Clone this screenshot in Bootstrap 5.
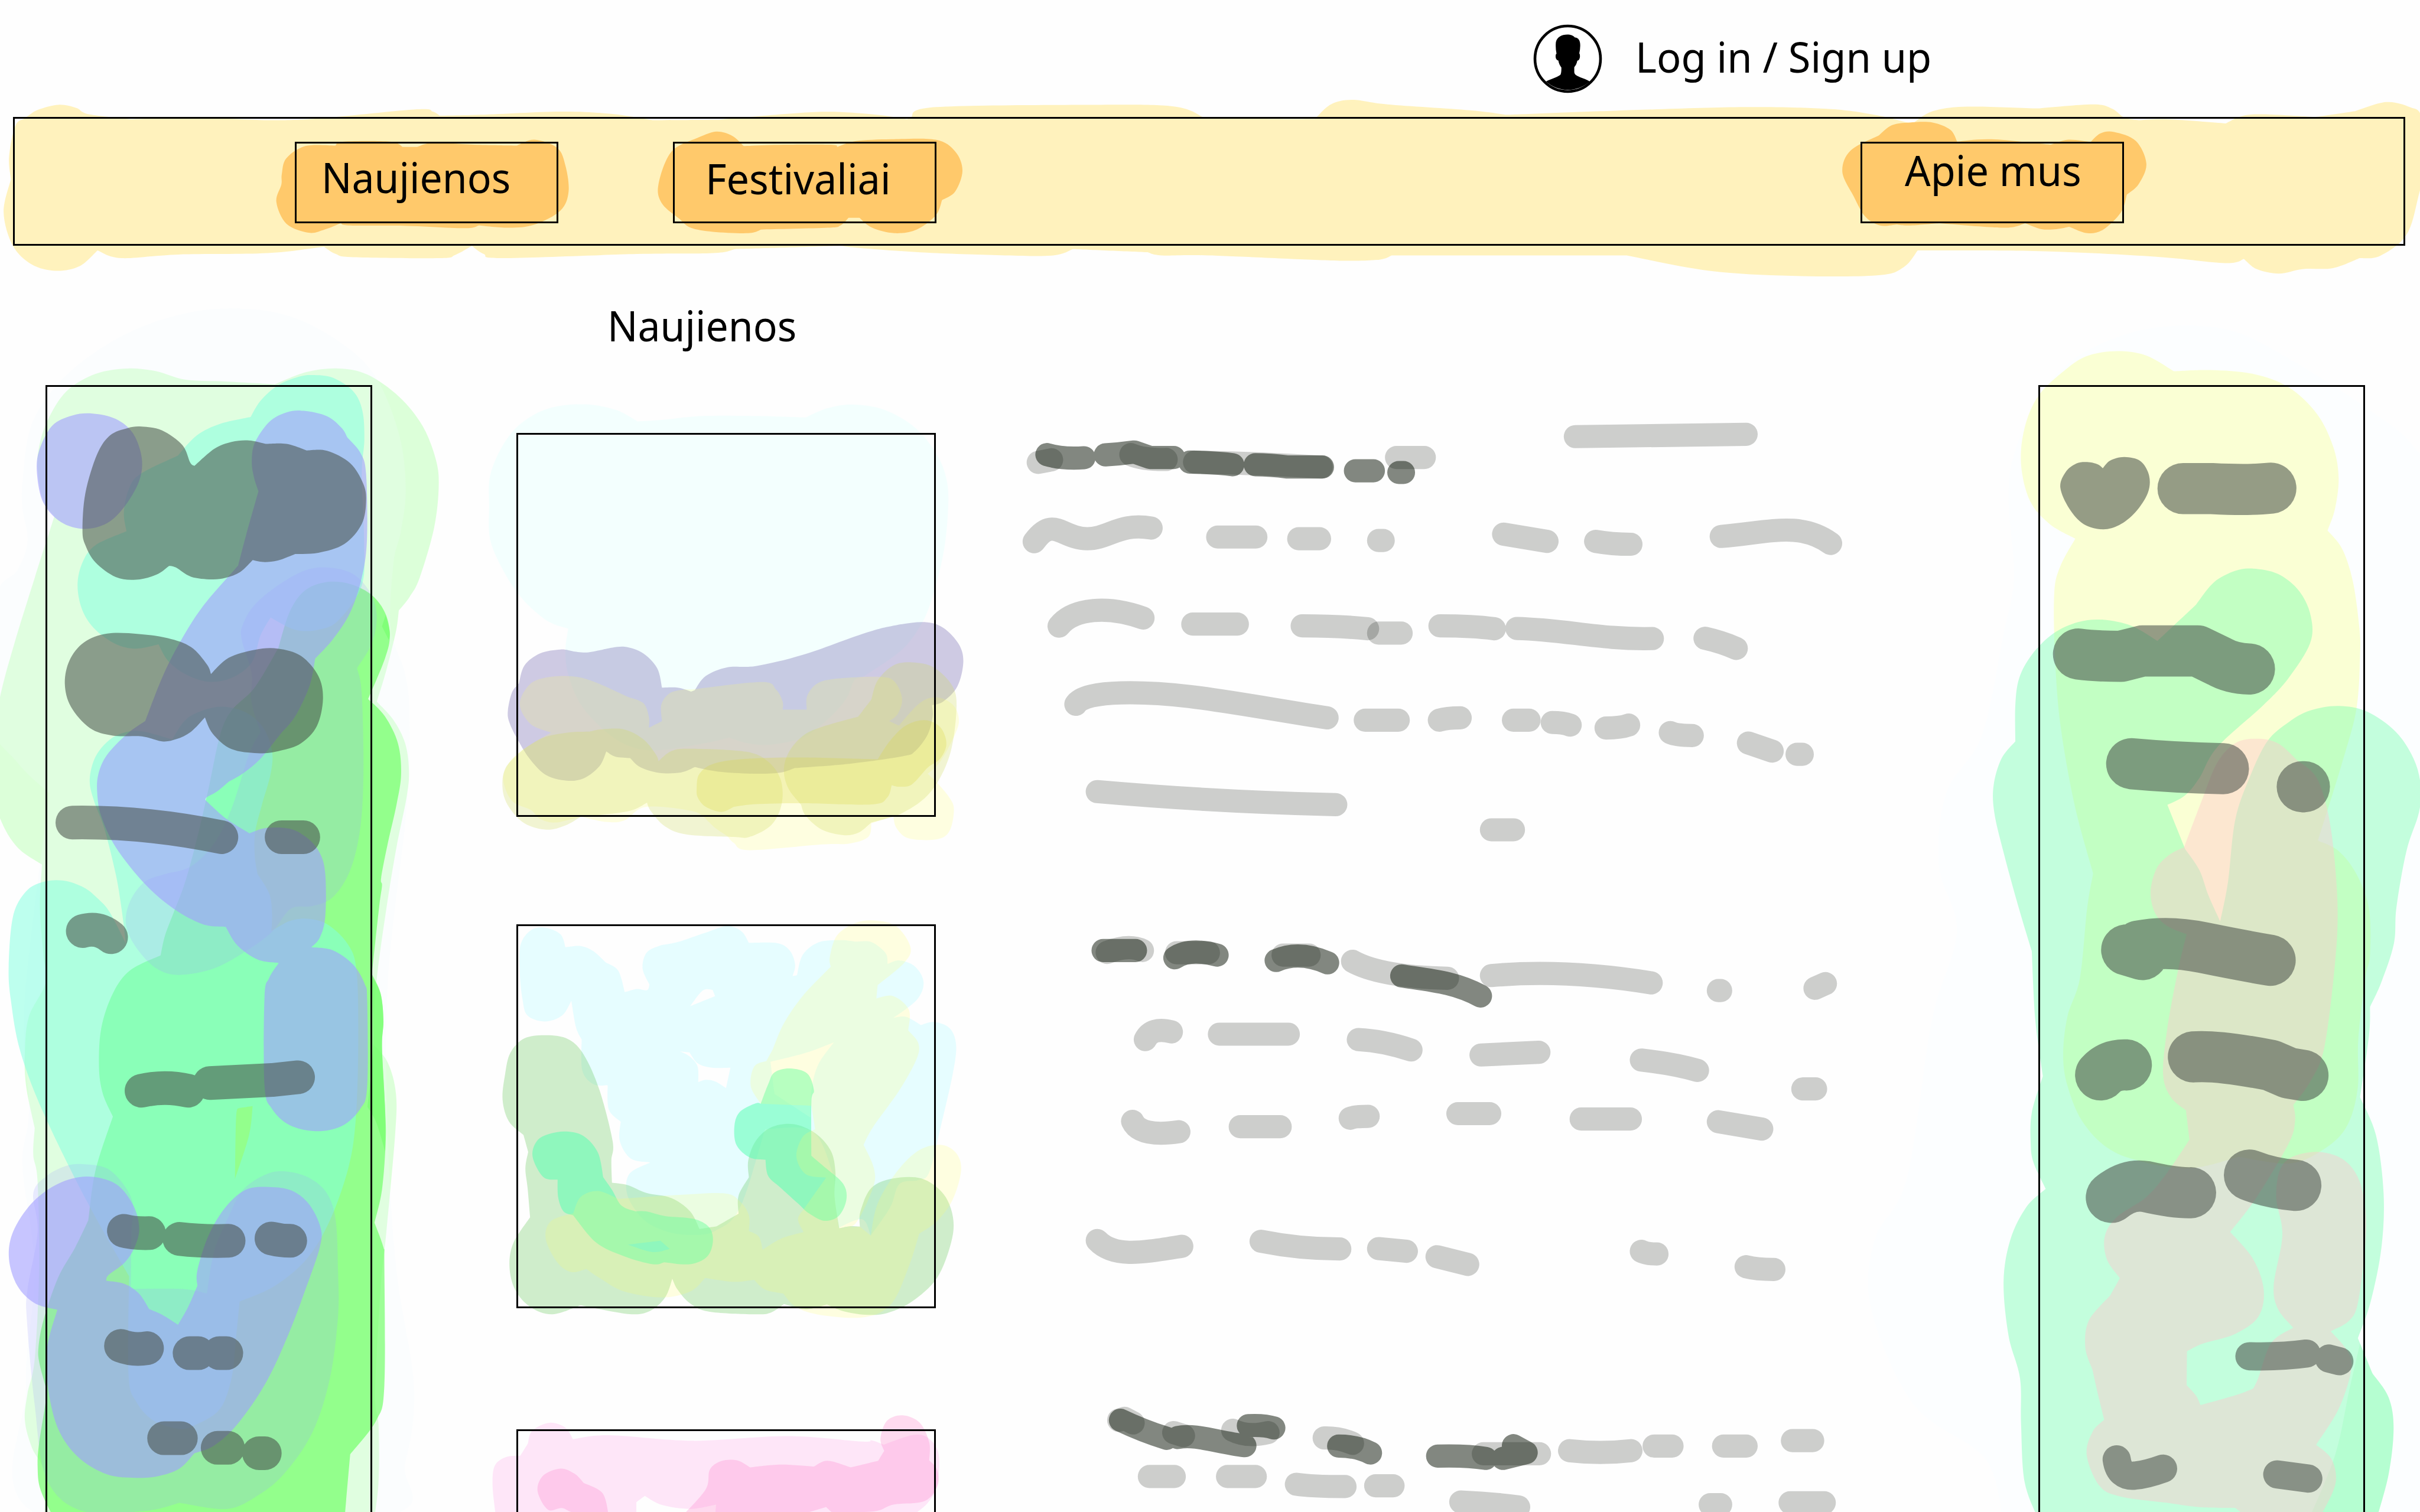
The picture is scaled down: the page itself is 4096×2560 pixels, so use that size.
<!DOCTYPE html>
<html lang="lt">
<head>
<meta charset="utf-8">
<meta name="viewport" content="width=device-width, initial-scale=1">
<title>Naujienos</title>
<link href="https://cdn.jsdelivr.net/npm/bootstrap@5.3.0/dist/css/bootstrap.min.css" rel="stylesheet">
<style>
body{background:#fefefe;color:#000;font-family:"Noto Sans","Open Sans",sans-serif}
.page{width:4096px;height:2560px}
.wash{left:0;top:0;width:4096px;height:2560px;z-index:0}
.layer{z-index:1}
.label{display:inline-block;font-size:72px;line-height:72px;white-space:nowrap;transform-origin:left top;transform:scaleX(.942)}
.label.lb-login{transform:scaleX(.953)}
.label.lb-fest,.label.lb-about{transform:scaleX(.95)}
.ink{border:3px solid #000;border-radius:0}
.top-bar{height:198px;padding:34px 0 0 2588px}
.avatar{width:131px;height:131px}
.login{margin:25px 0 0 49px}
.main-nav{height:218px;width:4049px;margin-left:22px;padding:39px 0 0 474px}
.nav-box{width:446px;height:138px;padding:0;text-align:left;color:#000}
.nav-news{padding:20px 0 0 42px}
.nav-fest{margin-left:194px;padding:22px 0 0 52px}
.nav-about{margin-left:1564px;padding:8px 0 0 72px}
.side{width:553px;height:2000px;margin-top:236px}
.side-left{margin-left:77px}
.side-right{margin-left:1866px}
.feed{width:710px;margin-left:244px;padding-top:98px}
.feed-title{margin:0 0 0 154px;height:219px}
.pic{height:650px;margin-bottom:182px}
.pic+.pic{margin-bottom:205px}
.t{fill:none;stroke:rgb(5,8,0);stroke-opacity:.195;stroke-width:39.2;stroke-linecap:round;stroke-linejoin:round}
.t path,.d path{vector-effect:non-scaling-stroke}
.d{fill:none;stroke:rgb(6,16,2);stroke-opacity:.5;stroke-width:39.2;stroke-linecap:round;stroke-linejoin:round}
.s{stroke:rgb(68,76,70);stroke-opacity:1;fill:rgb(68,76,70);opacity:.55}
.s .ln{fill:none}
</style>
<script src="https://cdn.jsdelivr.net/npm/bootstrap@5.3.0/dist/js/bootstrap.bundle.min.js"></script>
</head>
<body>
<div class="page position-relative overflow-hidden">
<svg class="wash position-absolute" viewBox="0 0 5333 3333" preserveAspectRatio="none" aria-hidden="true">
<!-- navigation washes -->
<path fill="#fff2bd" data-p="56,260 84,242 129,231 168,238 196,252 288,263* 421,259 603,265 716,260 919,241 954,246 969,255* 1059,253 1235,246 1347,251 1438,265* 1585,264* 1796,247 1922,252 1999,263* 2007,259 2063,236 2426,231 2589,235 2651,258* 2809,262 2898,262* 2933,230 2981,220 3057,230 3239,243 3320,253* 3559,244 3845,236 4026,240 4130,253 4214,273* 4259,245 4337,235 4490,239* 4613,230 4655,240 4681,259 4713,265* 4778,263 4905,272* 4940,256 4986,252 5102,258* 5190,245* 5258,225 5310,236 5336,257 5345,350 5329,435 5303,518 5245,564 5200,569* 5141,591 5076,593 5022,603 4973,593 4945,571* 4904,580 4752,566 4506,554 4226,552* 4195,589 4136,607 3948,608 3767,597 3585,563* 3067,563* 3034,573 2933,574 2665,563 2560,563 2529,556* 2364,549* 2321,563 2216,563 2043,557 1900,547 1852,542* 1620,549* 1571,558 1403,560 1108,569 1066,560 1040,542* 1003,562 968,569 779,567 740,560 714,544* 589,558 393,561 267,569 215,552* 175,587 123,597 70,583 28,541 8,468 24,395* 20,345 34,277"/>
<g fill="#ffc96b">
<path data-p="621,384 631,349 673,322 739,321* 758,312 859,312 888,324* 919,324* 954,315 1045,319 1139,321* 1178,308 1228,326 1246,365 1253,422 1235,464 1178,495 1122,502 1055,497* 1024,503 898,498 772,497 751,492* 715,506 680,513 631,493 609,445 620,407"/>
<path data-p="1451,407 1480,334 1539,303* 1578,290 1613,299 1639,322* 1726,319 1831,319 1845,324* 1887,311 1964,307 2062,308 2105,334 2121,376 2105,422 2076,441* 2062,475 2020,506 1971,514 1922,502 1894,480* 1870,480* 1852,497 1824,502 1677,506* 1649,514 1571,511 1522,502 1498,483* 1459,449"/>
<path data-p="4060,379 4078,332 4141,298* 4169,276 4208,270 4259,270 4298,286 4313,312* 4389,307 4519,319* 4558,308 4607,313* 4629,294 4659,291 4707,311 4730,361 4713,406 4687,429* 4674,468 4635,506 4600,514 4560,500* 4532,505 4499,505 4463,492* 4415,502 4272,492* 4208,497 4179,495* 4143,497 4110,477 4084,431*"/>
</g>
<!-- left column -->
<g transform="translate(0 680) scale(.63776 .84821)">
<path fill="#dcffd9" data-p="130,420 135,360 165,290 230,215 330,170 440,156 540,163 640,185 780,190 950,197* 1060,165 1170,156 1270,172 1380,230 1460,305 1505,390 1516,460 1500,570 1450,700 1415,750 1378,785* 1368,840 1335,940 1302,1022* 1360,1070 1400,1130 1413,1200 1405,1270 1370,1400 1335,1560 1300,1756 1290,1912* 1340,1960 1368,2040 1365,2150 1335,2400 1315,2550 1296,2820 1308,2900 1308,3050 1290,3160* 150,3160* 155,3030 110,2960 86,2890 95,2820 120,2730 135,2500 130,2270 115,2200 120,2130* 90,2020 86,1930 100,1840 158,1752 150,1680 138,1560 145,1445* 60,1400 0,1325 -50,1200 0,1010 50,870 120,700 188,540* 150,500"/>
<path fill="rgb(238,250,255)" fill-opacity=".2" data-p="78,520 78,450 110,300 220,180 400,80 600,20 800,0 1000,20 1180,90 1300,180 1380,330 1402,470 1385,580 1360,660 1350,830 1400,950 1415,1060 1405,1300 1340,1750 1340,2150 1370,2500 1430,2800 1400,3000 1310,3140 150,3140 90,2800 120,2500 78,2230 100,2080 85,1800 170,1260* 60,1180 -40,1060 -20,760 60,680 95,605"/>
<path fill="rgb(106,255,95)" fill-opacity=".65" data-p="962,882* 1000,790 1050,735 1120,712 1200,714 1280,742 1330,790 1347,850 1330,910 1272,1015* 1330,1060 1375,1130 1386,1210 1370,1290 1340,1390 1317,1480 1320,1500 1310,1556 1285,1730* 1315,1780 1325,1850 1320,1920 1330,2070 1333,2160 1320,2290 1294,2376* 1325,2440 1328,2480 1328,2800 1300,2890 1210,2978* 1190,3150* 190,3150* 140,3070 130,3010 135,2950 158,2840 158,2802* 136,2740 133,2700 150,2630 200,2520 260,2440 305,2370* 330,2240 390,2100* 355,2040 342,1970 350,1870 390,1780 450,1720 555,1681* 570,1630 600,1570 640,1490 680,1380 720,1250 760,1110 800,1045 880,985"/>
<path fill="rgb(110,255,100)" fill-opacity=".5" data-p="1270,2075* 1290,1910 1285,1735* 1315,1780 1325,1850 1320,1920 1330,2070 1331,2190* 1300,2115"/>
<path fill="rgb(110,255,100)" fill-opacity=".5" data-p="1320,826* 1333,796* 1347,840 1344,862*"/>
<path fill="rgb(130,255,222)" fill-opacity=".53" data-p="866,282* 900,240 960,200 1030,178 1080,173 1150,180 1220,215 1252,265 1259,340 1250,430 1258,600 1250,720 1170,810 1100,835 1020,835 935,803* 900,850 870,920 800,960 720,970 640,950 580,915 548,873* 470,884 400,872 330,835 285,785 268,720 285,660 330,615 437,579* 428,530 445,470 485,430 615,382* 680,330 760,300"/>
<path fill="rgb(130,255,222)" fill-opacity=".53" fill-rule="evenodd" data-p="310,1225 330,1165 380,1120 440,1100 500,1100 595,1120* 640,1070 700,1045 770,1035 850,1050 910,1090 940,1150 935,1210 905,1290 882,1360 880,1420 890,1470* 930,1520 940,1570 938,1618* 1000,1592 1060,1586 1130,1600 1200,1650 1232,1720 1238,1900 1230,2100 1205,2230 1140,2370 1060,2470 950,2540 828,2581* 815,2680 800,2780 760,2860 680,2900 620,2912 530,2890 470,2840 444,2770 446,2515* 300,2320 150,2090 70,1930 38,1800 30,1710 45,1580 90,1515 150,1490 220,1487 290,1505 340,1535 380,1570 435,1650* 420,1560 400,1470 360,1350 325,1280; 827,2078* 873,2073* 860,2150 812,2262* 816,2100"/>
<path fill="rgb(160,160,255)" fill-opacity=".2" data-p="835,860 840,820 880,770 960,720 1050,682 1130,673 1220,690 1280,740 1302,800 1285,870 1234,935* 1250,1000 1256,1200 1245,1350 1210,1460 1150,1530 1080,1553 1005,1560 940,1620 850,1670 740,1715 620,1732 540,1715 470,1660 435,1600 450,1540 500,1490 570,1470 660,1450 740,1390 800,1300 860,1160 900,1100* 868,1020 870,950; 115,2300 160,2255 230,2228 290,2224 370,2235 430,2280 460,2330 455,2400 452,2548* 630,2548 715,2560* 740,2450 790,2360 840,2290 920,2250 990,2243 1070,2260 1130,2300 1160,2370 1168,2500 1168,2620 1140,2780 1080,2920 980,3030 880,3090 780,3120 620,3104* 500,3125 280,3124 160,3040 120,2850 93,2630 95,2550 130,2400"/>
<path fill="rgb(162,158,255)" fill-opacity=".6" data-p="128,430 135,370 180,305 250,278 320,273 400,287 460,325 490,390 480,450 430,515 370,558 290,573 210,555 150,505; 870,400 880,350 930,295 990,270 1050,266 1130,280 1180,310 1200,335* 1245,375 1265,430 1268,600 1250,700 1210,790 1150,860 1089,910* 1070,980 1020,1060 970,1105* 900,1170 840,1208 790,1230* 750,1255 715,1270 709,1277* 780,1325 862,1364* 920,1350 1000,1352 1060,1375 1105,1415 1124,1470 1124,1580 1105,1635 1076,1660* 1150,1668 1220,1705 1260,1755 1269,1800 1269,2020 1245,2080 1180,2125 1090,2138 1000,2122 940,2080 914,2020 914,1790 930,1740 963,1701* 890,1692 820,1655 780,1607* 700,1600 600,1560 500,1495 400,1400 350,1320 336,1260 340,1210 370,1160 440,1105 502,1072* 560,960 620,870 700,775 823,668* 850,590 893,475* 878,440; 31,2470 45,2400 110,2325 200,2275 300,2256 400,2275 460,2330 481,2390 465,2440 430,2480 375,2512 367,2527* 430,2535 480,2560 515,2600* 560,2615 615,2641* 650,2595 682,2540* 682,2500 720,2410 780,2335 850,2290 930,2283 1010,2293 1070,2330 1108,2390 1105,2440 1060,2540 1000,2660 920,2790 820,2900 740,2955 672,2975* 620,3015 550,3034 470,3039 370,3030 270,2985 200,2910 165,2800 163,2700 198,2602* 120,2585 60,2540"/>
<g class="d s">
<path style="stroke:none" data-p="285,575 295,480 335,380 380,330 440,311 490,307 560,317 630,355 657,400 672,409* 740,365 800,347 860,343 918,352* 990,352 1060,369* 1130,370 1210,402 1255,455 1265,500 1250,560 1190,612 1100,635 1020,638* 960,655 910,659 873,654* 830,685 780,700 730,704 660,697 608,673 584,669* 540,692 470,705 400,698 330,660 295,615; 224,975 240,915 290,868 370,845 480,846 580,857 660,880 715,925 729,950* 790,908 880,887 960,884 1040,903 1100,955 1116,1015 1095,1085 1040,1130 970,1149 900,1156 800,1145 735,1105 708,1063* 660,1100 610,1119 560,1125 490,1112 390,1110 310,1090 245,1035"/>
<path class="ln" style="stroke-width:57px" d="M250,1336Q500,1333 765,1374M973,1374H1048M286,1618Q340,1606 384,1634M489,2033Q570,2019 650,2033M725,2013L940,2005L1030,1998M428,2397Q460,2404 515,2403M620,2418Q700,2425 790,2423M938,2417Q970,2423 1003,2423M418,2696Q460,2708 508,2702M655,2715H685M758,2715H782M567,2936H625M752,2961H788M895,2975H915"/>
</g>
</g>
<!-- right column -->
<g transform="translate(4100 680) scale(.78635 .84821)">
<path fill="#fcfeff" data-p="415,500 430,380 500,230 600,130 750,65 900,45 1050,60 1200,130 1420,260 1560,370 1700,600 1700,3160* 400,3160* 350,2990 150,2850 30,2600 40,2420 130,2260 200,1850 270,1620 220,1450 240,1260 340,1110 400,850 430,700"/>
<path fill="#faffd4" data-p="450,405 460,310 500,225 580,155 640,122 720,111 800,122 878,163* 980,160 1100,170 1200,205 1280,275 1325,360 1340,440 1330,520 1309,577* 1350,625 1380,710 1398,830 1400,900 1390,1040 1350,1180 1282,1383* 1340,1410 1390,1470 1425,1560 1428,1680 1415,1740 1395,1900 1393,2030 1360,2130 1290,2190 1200,2222 1060,2205* 920,2235 780,2215 690,2180 620,2110 580,2020 568,1940 580,1840 615,1740 635,1560 652,1468* 600,1290 560,1080 545,900 543,740 560,670 602,598* 530,560 475,500"/>
<path fill="rgb(110,255,170)" fill-opacity=".4" data-p="434,1030 445,960 480,900 540,845 610,815 680,809 760,825 832,864* 940,770* 990,712 1050,682 1100,676 1170,690 1230,735 1262,800 1260,870 1200,960 1130,1030 1000,1140 950,1220 910,1265 860,1290* 910,1405* 950,1460 975,1525 1008,1593* 1030,1490 1050,1330 1090,1220 1140,1125 1200,1075 1260,1045 1340,1033 1420,1048 1500,1100 1550,1170 1570,1240 1565,1310 1530,1410 1502,1556 1495,1650 1460,1750 1428,1815* 1425,1890 1400,2050* 1445,2150 1466,2300 1460,2440 1430,2580 1394,2676* 1435,2768* 1480,2830 1494,2910 1480,3030 1445,3150* 500,3150* 460,3050 450,2900 447,2780 415,2670 401,2530 420,2420 465,2335 519,2288* 485,2220 477,2170 480,2090 511,1995* 490,1850 480,1670* 443,1556 400,1410 375,1310 373,1240 395,1170 434,1125*"/>
<path fill="rgb(100,255,140)" fill-opacity=".14" data-p="1255,3150* 1330,2980 1370,2810 1400,2690* 1435,2768* 1480,2830 1494,2910 1480,3030 1445,3150*"/>
<path fill="rgb(255,199,205)" fill-opacity=".43" data-p="813,1515 830,1455 865,1420 907,1400* 960,1270 1000,1180 1050,1130 1110,1118 1170,1130 1225,1175* 1275,1215 1305,1290 1325,1400 1337,1556 1330,1700 1300,1920 1260,2010 1213,2070* 1218,2110 1200,2170 1110,2310 1036,2400* 1100,2470 1130,2550 1115,2620 1050,2665 960,2690 915,2710* 914,2798* 940,2825 953,2850* 1080,2815 1110,2790 1150,2690 1213,2649* 1170,2600 1158,2540 1180,2430 1180,2380 1165,2310 1175,2240 1210,2205 1280,2192 1350,2210 1395,2260 1415,2340 1415,2430 1395,2580 1370,2630 1318,2658* 1365,2710 1375,2760 1340,2860 1277,2953* 1320,2990 1332,3050 1300,3120 1270,3160* 1110,3160* 1050,3117* 950,3115 850,3103 730,3088 670,3060 634,2980 650,2920 683,2888* 665,2820 650,2758* 630,2700 640,2630 700,2565* 727,2520* 690,2470 685,2410 720,2360 800,2310 860,2245 922,2160* 912,2084* 870,2050 848,1990 860,1870 890,1720 914,1626* 860,1605 825,1570"/>
<g class="d s">
<path style="stroke:none" data-p="560,465 575,425 605,403 635,399 665,405 679,415* 700,395 740,386 785,397 809,435 805,480 770,530 725,563 678,574 625,560 585,520"/>
<path class="ln" style="stroke-width:86.6px" d="M904,468H985Q1090,473 1150,467M611,898Q660,904 730,904L790,890H945L1005,917Q1040,936 1090,937M760,1183Q880,1193 1017,1196M1238,1243h6M746,1667L790,1679M780,1657Q860,1642 960,1661T1148,1694M673,1992Q700,1964 745,1966M933,1945Q1000,1940 1150,1967L1200,1987L1240,1993M703,2310Q750,2274 800,2282Q880,2299 925,2298M1090,2252Q1150,2274 1220,2279"/>
<path class="ln" style="stroke-width:47.7px" d="M1090,2723Q1180,2725 1250,2716M1313,2729L1342,2736M718,2991Q725,3038 770,3033Q800,3031 848,3015M1168,3030L1255,3041"/>
</g>
</g>
<!-- first picture -->
<g transform="translate(1080 850) scale(.68878 .66327)">
<path fill="#f3fffe" data-p="-3,400 0,300 40,200 100,125 190,75 300,62 400,80 472,119* 560,113 680,101 850,101 1010,106* 1080,75 1160,63 1260,80 1360,140 1430,230 1462,320 1465,420 1450,560 1410,720 1370,810 1310,885 1195,967* 1165,980 1140,1040 1080,1110 1000,1170 900,1193 830,1190 765,1170* 680,1190 540,1212 450,1200 370,1150 290,1060 250,960 241,880 250,808* 180,780 100,705 40,610 0,510"/>
<path fill="rgb(130,118,185)" fill-opacity=".38" data-p="57,1080 70,1020 92,990* 110,930 160,890 225,877 265,883* 310,887 370,875* 430,868 490,890 535,940 550,1004* 600,1004 643,1017* 655,1012* 690,965 760,936 850,932 1000,895 1200,822 1300,796 1390,786 1450,805 1500,860 1514,920 1495,1000 1450,1050 1414,1062* 1416,1100 1400,1160 1360,1215 1320,1232 1150,1257 975,1271* 930,1286 850,1290 730,1283 655,1268* 610,1286 540,1287 480,1268 448,1238* 400,1233 372,1216* 350,1265 300,1305 245,1313 180,1295 130,1245 90,1180 62,1120"/>
<path fill="rgb(255,255,107)" fill-opacity=".2" data-p="95,1060 125,995 180,970 260,966 330,983 440,1034* 490,1055 508,1100 508,1137* 550,1115* 548,1060 575,1022 620,1010 660,1008 870,985 915,1010 936,1050 936,1077* 1013,1077* 1015,1030 1050,988 1120,973 1250,968 1295,985 1318,1040 1305,1090 1277,1115* 1308,1130* 1375,1055 1430,1036 1480,1060 1500,1110 1485,1165 1440,1250 1400,1290* 1430,1320 1470,1370 1484,1410 1470,1480 1430,1508 1340,1505 1300,1470 1290,1430* 1220,1455* 1210,1500 1150,1522 1060,1525 830,1544 780,1520 760,1498* 720,1470 700,1450* 650,1415 500,1400 430,1445 370,1450 290,1432* 210,1452 160,1440 130,1410 70,1380 42,1310 60,1255 105,1210 195,1153* 130,1125"/>
<path fill="rgb(209,219,96)" fill-opacity=".28" data-p="40,1340 50,1270 105,1210* 170,1170 250,1153 318,1150* 360,1142 430,1143 490,1175 530,1225 539,1248* 580,1215 640,1207 820,1217 890,1250 930,1310 933,1390 900,1460 830,1500 780,1500 630,1492 560,1465 515,1415 502,1386* 440,1415 290,1433* 240,1462 180,1476 110,1455 60,1400; 940,1280 955,1220 1000,1165 1060,1135 1178,1100* 1220,1043* 1240,980 1290,930 1350,920 1420,937 1480,1000 1492,1080 1470,1230 1410,1350 1320,1420 1220,1452* 1180,1485 1130,1494 1060,1475 1010,1430 995,1393* 955,1340"/>
<path fill="rgb(219,216,68)" fill-opacity=".28" data-p="661,1340 670,1290 720,1255 830,1240 1000,1236 1240,1242* 1280,1180 1330,1130 1390,1112 1440,1135 1460,1190 1440,1240 1400,1270 1350,1325 1310,1333 1285,1328* 1270,1370 1220,1392 1000,1388 850,1391 780,1400* 740,1417 690,1400 665,1370"/>
</g>
<!-- second and third pictures -->
<g transform="translate(1080 1980) scale(.68878 .86288)">
<path fill="#e6fdff" fill-rule="evenodd" data-p="95,190 97,120 130,82 175,75 225,92 241,125* 290,122 330,135 370,164* 410,185 431,240* 470,232 502,235 510,221* 488,180 500,140 540,122 600,112 700,85 760,71 805,85 828,114* 920,115 960,135 976,170 968,199* 982,197* 1000,145 1050,113 1120,107 1170,111* 1220,112 1265,140 1272,168* 1310,159 1360,175 1387,215 1365,260 1290,306* 1330,303 1378,324* 1420,316 1470,332 1491,375 1480,450 1440,590 1405,700 1370,720 1310,730 1280,790 1218,862* 1190,820 1115,842* 1102,760 1095,700 1030,595 880,590* 800,790 720,850 640,860 560,850 490,820 440,760 445,705 512,675* 450,665 415,620 418,571* 380,540 376,478* 330,475 295,440 293,361* 275,330 260,262* 230,300 175,315 120,300 104,260; 640,276* 680,236 712,234* 720,250*; 608,391* 638,394* 665,422 710,433 769,433* 755,485* 720,468 690,464 666,470* 664,430 640,405; 897,418* 1010,395 1100,368* 1050,425 1028,490 1025,560* 910,500*"/>
<path fill="rgb(98,200,85)" fill-opacity=".3" data-p="40,515 48,450 65,395 110,358 180,350 250,360 300,400 350,490 392,620 388,670 390,727* 440,733 500,753 580,766 640,800 670,845* 725,838* 795,806* 795,760 828,713* 826,670 850,620 900,585 970,577 1040,600 1090,645 1105,700 1102,760 1117,843* 1150,838 1183,839* 1185,800 1220,740 1290,716 1380,716 1450,755 1481,815 1475,880 1430,970 1350,1030 1270,1060 1200,1064 1130,1055 1078,1038* 1010,1050 940,1037* 900,1058 850,1063 700,1056 640,1035 600,1000 583,972* 560,1020 510,1055 440,1062 290,1040* 200,1063 130,1045 80,1000 62,940 75,880 128,815* 120,740 113,690 122,648* 107,605* 60,570"/>
<path fill="rgb(87,255,178)" fill-opacity=".53" data-p="136,660 150,620 190,602 245,596 300,608 345,650 362,713* 390,745 420,785 465,800* 500,800 560,812 650,819 700,840 713,875 695,915 640,935 557,930* 520,935 430,915 340,880 266,810* 235,800 218,765 216,719* 170,712; 782,580 800,545 850,524 866,525* 890,475 910,445 960,435 1015,448 1036,490 1028,520 1028,658* 1075,690 1130,730 1140,770 1115,812 1068,824 1020,805 995,787* 930,740 890,710 881,668* 830,662 788,630"/>
<path fill="rgb(255,255,107)" fill-opacity=".2" fill-rule="evenodd" data-p="1087,150 1110,95 1170,63 1230,57 1300,72 1345,125 1325,165 1240,222* 1236,256* 1290,250 1340,285 1338,338* 1370,370 1365,410 1310,490 1225,585 1195,630* 1228,690 1225,740 1170,830 1117,843* 1003,853* 985,820 1003,795* 1075,714* 1010,705 980,660 1000,610 1040,590* 1028,530* 866,525* 834,480 845,430 884,416* 905,385* 940,320 1000,250 1090,175*; 178,870 195,825 266,805* 290,763 345,748 410,768* 600,758 750,754 800,775 828,810 828,850* 860,865 872,898* 930,870 1003,853* 1117,843* 1183,839* 1218,862* 1240,780 1300,700 1370,645 1440,630 1490,650 1507,695 1480,770 1430,825 1373,857* 1340,940 1285,1035 1200,1070 1060,1065 980,1045 938,1010* 880,1000 845,975* 780,980 688,970* 640,1005 550,1020 430,1005 350,970 308,947* 260,955 215,930; 440,885* 545,875* 575,896* 520,904"/>
<path fill="#fee6f8" data-p="8,1500 15,1450 50,1428 97,1424* 121,1393* 135,1360 190,1340 240,1352 265,1382* 380,1372 650,1386 950,1374 1190,1388 1220,1385 1260,1396* 1350,1372 1400,1378 1435,1420 1430,1500 1400,1545 1350,1578* 720,1578* 723,1549* 640,1560 550,1550 495,1527* 468,1543* 468,1578* 18,1578*"/>
<path fill="rgb(255,126,202)" fill-opacity=".28" data-p="152,1515 170,1475 225,1457 270,1470 300,1494* 360,1520 380,1580* 270,1570 230,1558 185,1562; 615,1578* 690,1510 703,1460 740,1438 790,1436 832,1454* 930,1447 1036,1452* 1080,1437 1154,1454* 1242,1437* 1261,1412* 1249,1380 1270,1335 1320,1321 1375,1340 1405,1390 1405,1436* 1430,1460 1432,1500 1390,1540 1290,1549 1230,1566 1095,1570* 1075,1555* 980,1578*"/>
</g>
<!-- body copy scribbles -->
<g transform="translate(2200 900) scale(1.27551 .63776)">
<g class="t"><path d="M997,98L1292,90M69,187L92,178M229,160Q250,178 290,177M339,186Q450,190 558,203M688,170H736M62,461C95,370 110,451 154,451C190,451 210,395 264,414M379,445H445M519,451H555M657,457H665M873,435L948,460M1032,460Q1060,470 1093,470M1249,443C1330,430 1385,390 1438,467M105,753C130,690 190,682 250,725M336,746H413M525,752Q590,752 638,762M763,752Q820,752 857,762M896,761C980,765 1040,800 1130,796M1221,795Q1250,808 1275,830M134,1023C150,970 260,980 330,996C400,1013 480,1043 568,1070M634,1078H691M762,1078Q775,1070 798,1070M890,1078H917M957,1086Q975,1086 988,1095M1050,1105Q1075,1105 1089,1095M1161,1121Q1172,1131 1199,1131M1296,1157L1337,1185M1380,1196H1389M171,1325Q370,1360 583,1370M852,1457H890"/><path d="M657,777H696"/></g>
<g class="d"><path d="M84,160Q110,176 148,171M185,161Q210,158 235,151L262,170H303M331,186Q380,188 405,195M444,195Q470,195 500,203H560M617,216H648M692,222H700"/></g>
</g>
<g transform="translate(2200 2000) scale(1.27551 .85013)">
<g class="t"><path d="M188,117Q225,95 249,112M308,118H363M492,124H537M612,140Q660,180 776,184M852,177Q980,160 1128,196M1244,216H1248M1411,210L1429,198M254,343Q265,310 299,323M382,329H501M622,343Q665,346 713,370M834,383L934,376M1111,396Q1170,406 1208,423M1390,471H1412M232,555Q245,597 312,582M418,569H487M608,547Q615,542 639,542M794,535H849M1007,549H1092M1244,556L1319,575M171,864C200,910 250,895 317,879M454,866Q520,886 590,886M657,885L705,892M758,906L811,926M1111,892Q1120,899 1138,899M1292,932Q1310,939 1340,939M208,1330L218,1325L233,1337M303,1362L320,1370M405,1356Q430,1375 466,1362M563,1376Q590,1375 612,1390M838,1417H935M987,1409Q1040,1418 1093,1409M1133,1397H1164M1253,1397H1292M1372,1383H1407M261,1476H304M396,1476H444M515,1496Q540,1502 599,1502M652,1500H682M799,1542Q850,1545 899,1555M1230,1549H1248M1368,1544H1427"/></g>
<g class="d"><path d="M181,112H237M305,131Q330,105 378,124M480,138Q520,112 569,144M697,178C750,190 790,195 833,230M211,1330Q250,1358 291,1377M310,1375C340,1365 380,1388 426,1396M432,1344Q460,1342 476,1350M588,1397Q620,1397 643,1415M759,1423Q810,1421 842,1429M872,1429L912,1414L890,1396"/></g>
</g>
</svg>

<header class="layer position-relative top-bar d-flex align-items-start">
<svg class="avatar flex-shrink-0" viewBox="0 0 510 510" role="img" aria-label="Profilis"><circle cx="255" cy="255" r="216" fill="#fff" stroke="#000" stroke-width="18"/><path d="M112,405C145,386 180,380 205,362Q214,354 213,312Q198,295 193,267Q174,262 175,236Q175,225 181,221Q173,180 177,145C184,112 215,95 252,95C275,95 292,102 301,114Q330,116 336,150Q340,180 331,219Q337,226 335,245Q332,265 318,268Q313,295 298,310V345Q300,360 318,368C345,382 375,388 400,405A216,216 0 0 1 112,405Z"/></svg>
<div class="login"><span class="label lb-login">Log in / Sign up</span></div>
</header>
<nav class="layer position-relative main-nav ink d-flex align-items-start">
<a class="btn ink nav-box nav-news flex-shrink-0" href="#"><span class="label">Naujienos</span></a>
<a class="btn ink nav-box nav-fest flex-shrink-0" href="#"><span class="label lb-fest">Festivaliai</span></a>
<a class="btn ink nav-box nav-about flex-shrink-0" href="#"><span class="label lb-about">Apie mus</span></a>
</nav>
<div class="layer position-relative d-flex align-items-start">
<aside class="side side-left ink flex-shrink-0"></aside>
<main class="feed flex-shrink-0">
<h1 class="feed-title"><span class="label fw-normal">Naujienos</span></h1>
<div class="pic ink"></div>
<div class="pic ink"></div>
<div class="pic ink"></div>
</main>
<aside class="side side-right ink flex-shrink-0"></aside>
</div>
</div>
<script>
// Smooth closed outlines through the listed points; a starred point is a corner.
document.querySelectorAll('path[data-p]').forEach(function (el) {
  el.setAttribute('d', el.dataset.p.split(';').map(function (part) {
    var p = part.trim().split(/\s+/).map(function (s) {
      var c = s.slice(-1) === '*', v = s.replace('*', '').split(',');
      return {x: +v[0], y: +v[1], c: c};
    }), n = p.length, d = 'M' + p[0].x + ',' + p[0].y;
    for (var i = 0; i < n; i++) {
      var b = p[i], c = p[(i + 1) % n], a = b.c ? b : p[(i + n - 1) % n], e = c.c ? c : p[(i + 2) % n];
      d += 'C' + [b.x + (c.x - a.x) / 6, b.y + (c.y - a.y) / 6, c.x - (e.x - b.x) / 6, c.y - (e.y - b.y) / 6, c.x, c.y].map(function (v) { return v.toFixed(1); }).join(',');
    }
    return d + 'Z';
  }).join(''));
});
</script>
</body>
</html>
